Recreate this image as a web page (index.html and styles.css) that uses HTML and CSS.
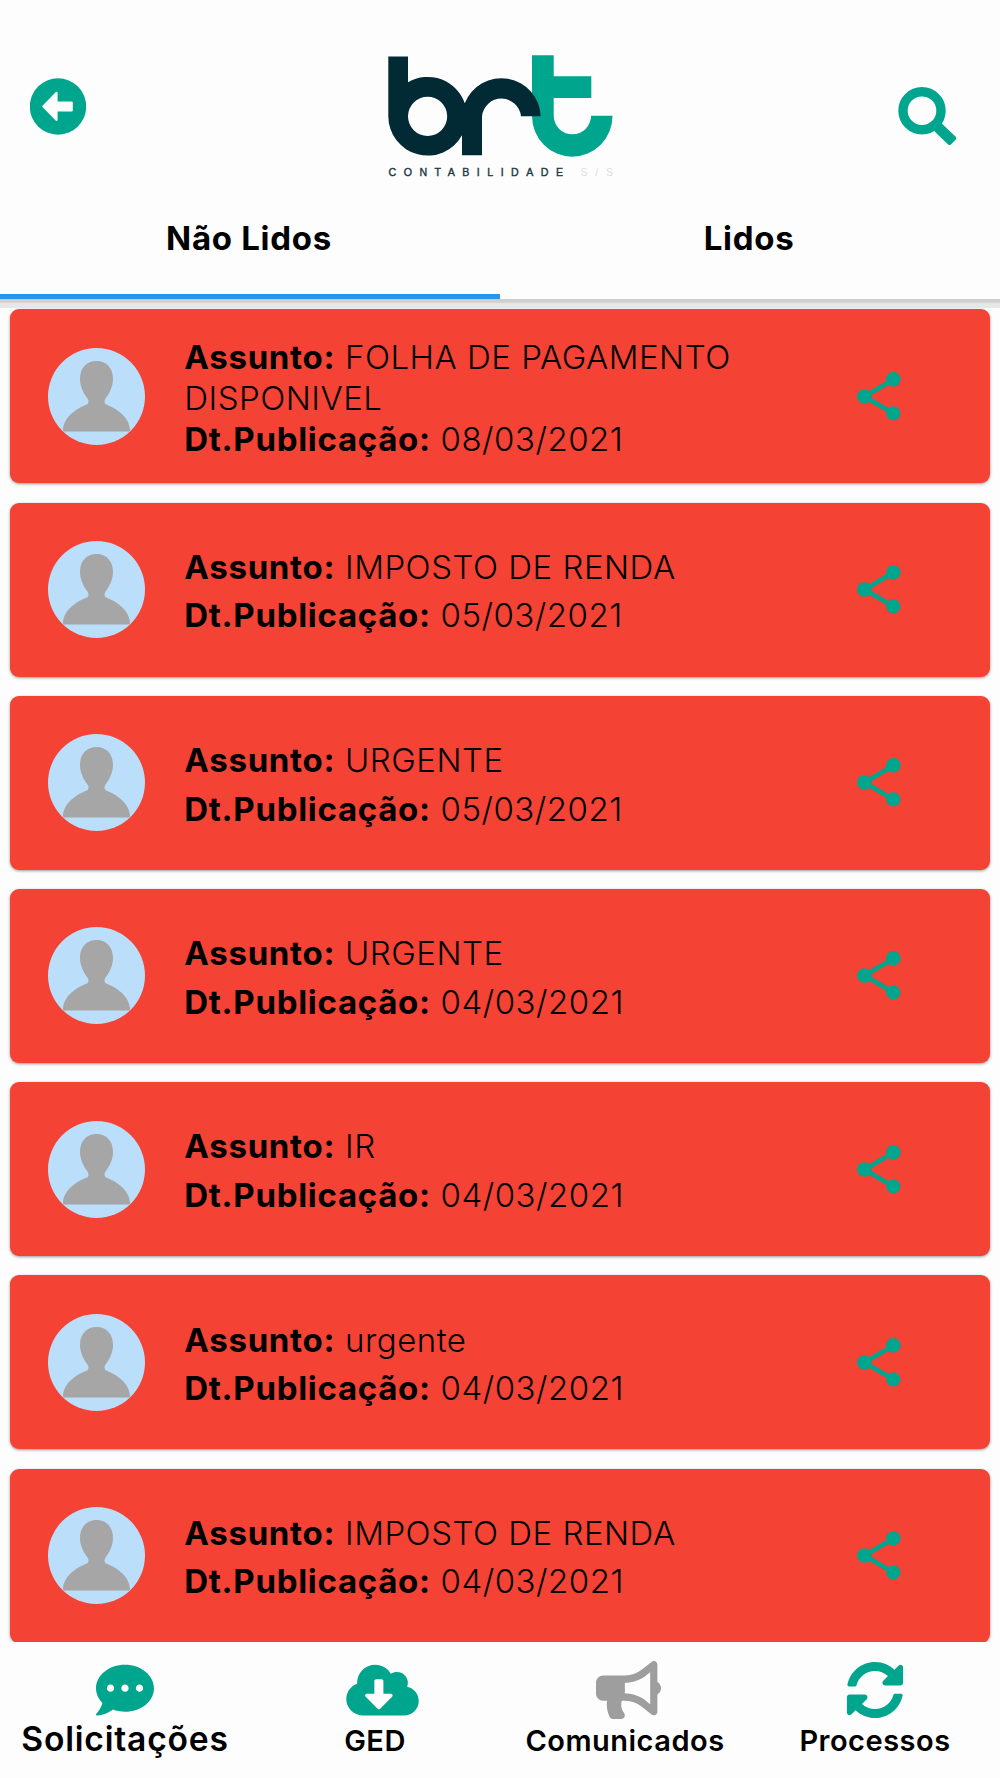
FILE: index.html
```
<!DOCTYPE html>
<html lang="pt-BR">
<head>
    <meta charset="UTF-8">
    <meta name="viewport" content="width=device-width, initial-scale=1.0">
    <title>Comunicados</title>
    <link rel="stylesheet" href="styles.css">
</head>
<body>
    <svg class="symbols">
        <symbol id="avatar" viewBox="0 0 97 97">
            <circle cx="48.5" cy="48.5" r="48.5" fill="#bbdefb"/>
            <path fill="#a6a6a6" d="M48.500 13C58.500 13 65 20 65 31C65 39 61 46 57.500 50.500Q55.500 53.500 57.500 56.200C68 60 82 69 82 82.500Q82 83.500 81 83.500H16Q15 83.500 15 82.500C15 69 29 60 39.500 56.200Q41.500 53.500 39.500 50.500C36 46 32 39 32 31C32 20 38.500 13 48.500 13Z"/>
        </symbol>
        <symbol id="share" viewBox="0 0 44 49">
            <path d="M36.500 7.500L7.500 24.500L36.500 41.500" fill="none" stroke="#00a58e" stroke-width="4.600"/>
            <circle cx="36.300" cy="7.400" r="7.300" fill="#00a58e"/>
            <circle cx="7.400" cy="24.500" r="7.300" fill="#00a58e"/>
            <circle cx="36.300" cy="41.400" r="7.100" fill="#00a58e"/>
        </symbol>
    </svg>

    <header>
        <a class="back" href="#">
            <svg width="56" height="57" viewBox="0 0 56 57">
                <circle cx="28" cy="28.500" r="28.200" fill="#00a58e"/>
                <path d="M13.200 28.400L26.600 14.700V24.400H41.800V32.400H26.600V42Z" fill="#fdfdfd" stroke="#fdfdfd" stroke-width="2" stroke-linejoin="round"/>
            </svg>
        </a>
        <svg class="logo" width="226" height="124" viewBox="388 55 226 124">
            <path fill="#00a58e" d="M532 55.300H553.700V76.300H591.300V98H553.700V115.700A18.700 18.700 0 0 0 591.100 115.700H612.500A40.250 41 0 0 1 532 115.700Z"/>
            <path fill="#022a35" fill-rule="evenodd" d="M388.300 56.600H408V82.200A39.300 39.300 0 0 1 464.800 103.200A39.300 39.300 0 0 1 540.700 116.200H521A19.600 19.600 0 0 0 482 116.200V155.300H462V135.300A39.300 39.300 0 0 1 388.300 116.300ZM427.600 96.700A19.600 19.600 0 1 0 427.600 135.900A19.600 19.600 0 1 0 427.600 96.700Z"/>
            <text class="logo-text" x="388.500" y="176.200" textLength="174.500">CONTABILIDADE</text>
            <text class="logo-text pale" x="580.500" y="176.200" textLength="32.500">S/S</text>
        </svg>
        <a class="search" href="#">
            <svg width="60" height="60" viewBox="0 0 60 60">
                <circle cx="24" cy="23.700" r="19" fill="none" stroke="#00a58e" stroke-width="9.400"/>
                <path d="M43.200 38.700L56.300 51.200L51.500 56L38.500 43.500Z" fill="#00a58e" stroke="#00a58e" stroke-width="4" stroke-linejoin="round"/>
            </svg>
        </a>
    </header>

    <nav class="tabs">
        <a class="active" href="#">Não Lidos</a>
        <a href="#">Lidos</a>
    </nav>

    <main>
        <div class="card compact">
            <svg class="avatar"><use href="#avatar"/></svg>
            <div class="info">
                <p><b>Assunto:</b> FOLHA DE PAGAMENTO DISPONIVEL</p>
                <p><b>Dt.Publicação:</b> 08/03/2021</p>
            </div>
            <svg class="share"><use href="#share"/></svg>
        </div>
        <div class="card">
            <svg class="avatar"><use href="#avatar"/></svg>
            <div class="info">
                <p><b>Assunto:</b> IMPOSTO DE RENDA</p>
                <p><b>Dt.Publicação:</b> 05/03/2021</p>
            </div>
            <svg class="share"><use href="#share"/></svg>
        </div>
        <div class="card">
            <svg class="avatar"><use href="#avatar"/></svg>
            <div class="info">
                <p><b>Assunto:</b> URGENTE</p>
                <p><b>Dt.Publicação:</b> 05/03/2021</p>
            </div>
            <svg class="share"><use href="#share"/></svg>
        </div>
        <div class="card">
            <svg class="avatar"><use href="#avatar"/></svg>
            <div class="info">
                <p><b>Assunto:</b> URGENTE</p>
                <p><b>Dt.Publicação:</b> 04/03/2021</p>
            </div>
            <svg class="share"><use href="#share"/></svg>
        </div>
        <div class="card">
            <svg class="avatar"><use href="#avatar"/></svg>
            <div class="info">
                <p><b>Assunto:</b> IR</p>
                <p><b>Dt.Publicação:</b> 04/03/2021</p>
            </div>
            <svg class="share"><use href="#share"/></svg>
        </div>
        <div class="card">
            <svg class="avatar"><use href="#avatar"/></svg>
            <div class="info">
                <p><b>Assunto:</b> urgente</p>
                <p><b>Dt.Publicação:</b> 04/03/2021</p>
            </div>
            <svg class="share"><use href="#share"/></svg>
        </div>
        <div class="card">
            <svg class="avatar"><use href="#avatar"/></svg>
            <div class="info">
                <p><b>Assunto:</b> IMPOSTO DE RENDA</p>
                <p><b>Dt.Publicação:</b> 04/03/2021</p>
            </div>
            <svg class="share"><use href="#share"/></svg>
        </div>
    </main>

    <footer>
        <a class="big" href="#">
            <svg width="58" height="58" viewBox="0 0 512 512"><path d="M256 32C114.600 32 0 125.100 0 240c0 49.600 21.400 95 57 130.700C44.500 421.100 2.700 466 2.200 466.500c-2.200 2.300-2.800 5.700-1.500 8.700S4.800 480 8 480c66.300 0 116-31.800 140.600-51.400 32.700 12.300 69 19.400 107.400 19.400 141.400 0 256-93.100 256-208S397.400 32 256 32zM128 272c-17.700 0-32-14.300-32-32s14.300-32 32-32 32 14.300 32 32-14.300 32-32 32zm128 0c-17.700 0-32-14.300-32-32s14.300-32 32-32 32 14.300 32 32-14.300 32-32 32zm128 0c-17.700 0-32-14.300-32-32s14.300-32 32-32 32 14.300 32 32-14.300 32-32 32z"/></svg>
            <span>Solicitações</span>
        </a>
        <a class="ged" href="#">
            <svg width="73" height="58" viewBox="0 0 640 512"><path d="M537.600 226.600c4.100-10.700 6.400-22.400 6.400-34.600 0-53-43-96-96-96-19.700 0-38.100 6-53.300 16.200C367 64.200 315.300 32 256 32c-88.400 0-160 71.600-160 160 0 2.700.1 5.400.2 8.100C40.200 219.800 0 273.200 0 336c0 79.500 64.500 144 144 144h368c70.700 0 128-57.300 128-128 0-61.900-44-113.600-102.400-125.400zm-132.900 88.700L299.300 420.700c-6.200 6.200-16.400 6.200-22.600 0L171.300 315.300c-10.100-10.100-2.900-27.300 11.300-27.300H248V176c0-8.800 7.200-16 16-16h48c8.800 0 16 7.200 16 16v112h65.400c14.200 0 21.400 17.200 11.300 27.300z"/></svg>
            <span>GED</span>
        </a>
        <a class="current" href="#">
            <svg width="65" height="58" viewBox="0 0 576 512"><path d="M576 240c0-23.630-12.950-44.040-32-55.120V32.010C544 23.260 537.020 0 512 0c-7.120 0-14.190 2.380-19.980 7.020l-85.030 68.030C364.280 109.190 310.660 128 256 128H64c-35.350 0-64 28.650-64 64v96c0 35.350 28.650 64 64 64h33.700c-1.390 10.480-2.180 21.140-2.180 32 0 39.770 9.260 77.350 25.560 110.940 5.190 10.690 16.520 17.060 28.400 17.060h74.280c26.050 0 41.690-29.840 25.900-50.560-16.400-21.520-26.150-48.360-26.150-77.440 0-11.110 1.620-21.790 4.410-32H256c54.660 0 108.280 18.810 150.980 52.950l85.030 68.030a32.023 32.023 0 0 0 19.980 7.020c24.920 0 32-22.780 32-32V295.130C563.050 284.040 576 263.630 576 240zm-96 141.420l-33.050-26.440C392.950 311.780 325.120 288 256 288v-96c69.120 0 136.950-23.780 190.950-66.980L480 98.580v282.840z"/></svg>
            <span>Comunicados</span>
        </a>
        <a href="#">
            <svg width="58" height="58" viewBox="0 0 512 512"><path d="M370.720 133.280C339.458 104.008 298.888 87.962 255.848 88c-77.458.068-144.328 53.178-162.791 126.850-1.344 5.363-6.122 9.150-11.651 9.150H24.103c-7.498 0-13.194-6.807-11.807-14.176C33.933 94.924 134.813 8 256 8c66.448 0 126.791 26.136 171.315 68.685L463.030 40.970C478.149 25.851 504 36.559 504 57.941V192c0 13.255-10.745 24-24 24H345.941c-21.382 0-32.090-25.851-16.971-40.971l41.750-41.749zM32 296h134.059c21.382 0 32.090 25.851 16.971 40.971l-41.750 41.750c31.262 29.273 71.835 45.319 114.876 45.280 77.418-.070 144.315-53.144 162.787-126.849 1.344-5.363 6.122-9.150 11.651-9.150h57.304c7.498 0 13.194 6.807 11.807 14.176C478.067 417.076 377.187 504 256 504c-66.448 0-126.791-26.136-171.315-68.685L48.970 471.030C33.851 486.149 8 475.441 8 454.059V320c0-13.255 10.745-24 24-24z"/></svg>
            <span>Processos</span>
        </a>
    </footer>
</body>
</html>
```

FILE: styles.css
```
* {
    box-sizing: border-box;
}
body {
    display: flex;
    flex-direction: column;
    height: 1778px;
    margin: 0;
    overflow: hidden;
    background: #fdfdfd;
    color: #000;
    font-family: Inter, "Liberation Sans", sans-serif;
}
a {
    color: #000;
    text-decoration: none;
}
svg {
    display: block;
}
.symbols {
    position: absolute;
    width: 0;
    height: 0;
}
header {
    display: flex;
    justify-content: space-between;
    align-items: flex-start;
    height: 180px;
    padding: 55px 42px 0 30px;
}
.back {
    margin-top: 23px;
}
.logo {
    margin-left: 18px;
}
.search {
    margin-top: 32px;
}
.logo-text {
    font-family: "Liberation Sans", Arial, sans-serif;
    font-size: 10.6px;
    fill: #1c3843;
    stroke: #1c3843;
    stroke-width: 0.4px;
}
.logo-text.pale {
    fill: #dcdfdf;
    stroke: none;
}
.tabs {
    display: flex;
    height: 119px;
    flex-shrink: 0;
}
.tabs a {
    flex: 1;
    padding: 38px 2px 0 0;
    text-align: center;
    font-size: 33px;
    line-height: 40px;
    font-weight: 700;
    letter-spacing: 0.7px;
    border-bottom: 5px solid transparent;
}
.tabs .active {
    border-color: #2196f3;
}
main {
    display: flex;
    flex-direction: column;
    gap: 19.2px;
    height: 1343.3px;
    padding: 10.4px 10px 0;
    overflow: hidden;
    background: linear-gradient(#cbcbcb, #d6d6d6 4px, #e6e6e6 4px, #e8e8e8 9px, #fdfdfd 9.5px);
}
.card {
    display: flex;
    align-items: center;
    flex: none;
    height: 174px;
    padding: 0 89px 0 38.3px;
    background: #f44235;
    border-radius: 9px;
    box-shadow: 0 1px 3px rgba(0, 0, 0, 0.4);
}
.avatar {
    width: 97px;
    height: 97px;
}
.info {
    flex: 1;
    padding: 3.5px 70px 0 39px;
    font-size: 33px;
    font-weight: 300;
    line-height: 48.4px;
    letter-spacing: 0.5px;
}
.compact .info {
    line-height: 41px;
}
.info p {
    margin: 0;
}
.info b {
    font-weight: 700;
    letter-spacing: 0.7px;
}
.share {
    width: 44px;
    height: 49px;
}
footer {
    display: flex;
    flex: 1;
    padding-top: 18.5px;
}
footer a {
    display: flex;
    flex-direction: column;
    align-items: center;
    width: 250px;
    font-size: 29px;
    line-height: 36px;
    font-weight: 600;
    letter-spacing: 0.5px;
}
footer svg {
    fill: #00a58e;
}
footer span {
    margin-top: 4px;
}
.big {
    font-size: 33.6px;
    letter-spacing: 0.8px;
}
.big span {
    margin-top: 2px;
}
.ged svg {
    margin-left: 15px;
}
.current svg {
    fill: #9e9e9e;
    margin-left: 7px;
}
```
